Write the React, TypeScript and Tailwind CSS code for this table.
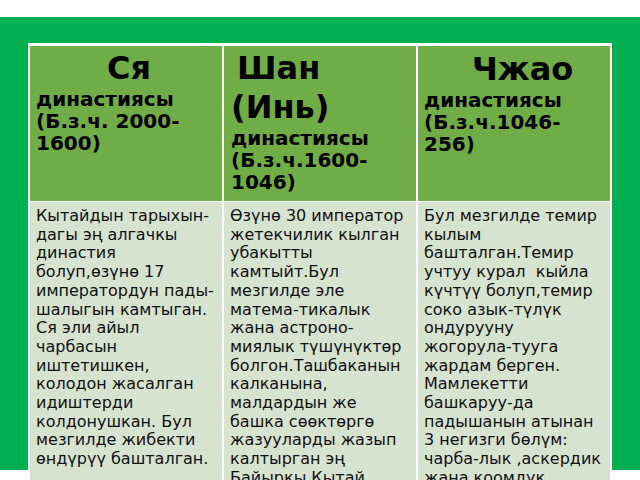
import React from "react";

const col1 = [
  "Кытайдын тарыхын-",
  "дагы эң алгачкы",
  "династия",
  "болуп,өзүнө 17",
  "императордун пады-",
  "шалыгын камтыган.",
  "Ся эли айыл",
  "чарбасын",
  "иштетишкен,",
  "колодон жасалган",
  "идиштерди",
  "колдонушкан. Бул",
  "мезгилде жибекти",
  "өндүрүү башталган.",
];

const col2 = [
  "Өзүнө 30 император",
  "жетекчилик кылган",
  "убакытты",
  "камтыйт.Бул",
  "мезгилде эле",
  "матема-тикалык",
  "жана астроно-",
  "миялык түшүнүктөр",
  "болгон.Ташбаканын",
  "калканына,",
  "малдардын же",
  "башка сөөктөргө",
  "жазууларды жазып",
  "калтырган эң",
  "Байыркы Кытай",
  "жазуусу.",
];

const col3 = [
  "Бул мезгилде темир",
  "кылым",
  "башталган.Темир",
  "учтуу курал  кыйла",
  "күчтүү болуп,темир",
  "соко азык-түлүк",
  "ондурууну",
  "жогорула-тууга",
  "жардам берген.",
  "Мамлекетти",
  "башкаруу-да",
  "падышанын атынан",
  "3 негизги бөлүм:",
  "чарба-лык ,аскердик",
  "жана коомдук",
  "болуп бөлүнгөн.",
];

function Body({ lines }: { lines: string[] }) {
  return (
    <div className="bg-[#D6E3D0] pt-[5px] px-[6px] text-[16px] leading-[18.7px] text-[#111]">
      {lines.map((l, i) => (
        <div key={i} className="whitespace-pre">
          {l}
        </div>
      ))}
    </div>
  );
}

export default function App() {
  return (
    <div className="w-[640px] h-[480px] overflow-hidden bg-white font-['DejaVu_Sans',sans-serif]">
      <div className="mt-[17px] h-[453px] bg-[#00B050] pt-[26px] pl-[28px] pr-[28px]">
        <div className="grid grid-cols-3 gap-x-[2px] gap-y-[1px] bg-white border-t-[3px] border-x-2 border-white">
          <div className="bg-[#70AD47] pt-[3px] pb-[8px] px-[6px] font-bold text-black">
            <div className="text-[32px] leading-[39px] ml-[71px]">Ся</div>
            <div className="text-[20px] leading-[22px]">династиясы</div>
            <div className="text-[20px] leading-[22px]">(Б.з.ч. 2000-</div>
            <div className="text-[20px] leading-[22px]">1600)</div>
          </div>
          <div className="bg-[#70AD47] pt-[3px] pb-[8px] px-[7px] font-bold text-black">
            <div className="text-[32px] leading-[39px] ml-[6px]">Шан</div>
            <div className="text-[32px] leading-[39px]">(Инь)</div>
            <div className="text-[20px] leading-[22px]">династиясы</div>
            <div className="text-[20px] leading-[22px]">(Б.з.ч.1600-</div>
            <div className="text-[20px] leading-[22px]">1046)</div>
          </div>
          <div className="bg-[#70AD47] pt-[4px] pb-[8px] px-[6px] font-bold text-black">
            <div className="text-[32px] leading-[39px] ml-[48px]">Чжао</div>
            <div className="text-[20px] leading-[22px]">династиясы</div>
            <div className="text-[20px] leading-[22px]">(Б.з.ч.1046-</div>
            <div className="text-[20px] leading-[22px]">256)</div>
          </div>
          <Body lines={col1} />
          <Body lines={col2} />
          <Body lines={col3} />
        </div>
      </div>
    </div>
  );
}
